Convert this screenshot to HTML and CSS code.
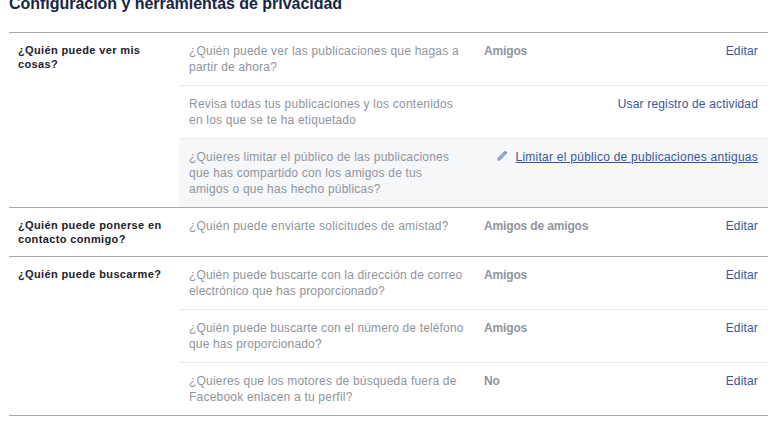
FILE: index.html
```html
<!DOCTYPE html>
<html lang="es">
<head>
<meta charset="utf-8">
<title>Configuración y herramientas de privacidad</title>
<link rel="stylesheet" href="styles.css">
</head>
<body>
<main class="settings">
  <h1 class="title">Configuración y herramientas de privacidad</h1>
  <section class="group">
    <h2 class="heading">¿Quién puede ver mis<br>cosas?</h2>
    <div class="rows">
      <div class="row">
        <p class="question">¿Quién puede ver las publicaciones que hagas a<br>partir de ahora?</p>
        <strong class="value">Amigos</strong>
        <a class="action">Editar</a>
      </div>
      <div class="row">
        <p class="question">Revisa todas tus publicaciones y los contenidos<br>en los que se te ha etiquetado</p>
        <a class="action">Usar registro de actividad</a>
      </div>
      <div class="row row-active">
        <p class="question">¿Quieres limitar el público de las publicaciones<br>que has compartido con los amigos de tus<br>amigos o que has hecho públicas?</p>
        <svg class="pencil" width="10" height="10" viewBox="0 0 10 10"><path d="M0 10V7.4L5.7 1.8 8.2 4.3 2.6 10Z" fill="#98a5c9"/><path d="M5.7 1.8 7.5 0H8.8L10 1.2V2.5L8.2 4.3Z" fill="#8c9ac2"/><path d="M0 7.6V10H2.4Z" fill="#c3cade"/></svg>
        <a class="action">Limitar el público de publicaciones antiguas</a>
      </div>
    </div>
  </section>
  <section class="group">
    <h2 class="heading">¿Quién puede ponerse en<br>contacto conmigo?</h2>
    <div class="rows">
      <div class="row">
        <p class="question">¿Quién puede enviarte solicitudes de amistad?</p>
        <strong class="value">Amigos de amigos</strong>
        <a class="action">Editar</a>
      </div>
    </div>
  </section>
  <section class="group">
    <h2 class="heading">¿Quién puede buscarme?</h2>
    <div class="rows">
      <div class="row">
        <p class="question question-tight">¿Quién puede buscarte con la dirección de correo<br>electrónico que has proporcionado?</p>
        <strong class="value">Amigos</strong>
        <a class="action">Editar</a>
      </div>
      <div class="row">
        <p class="question question-tight">¿Quién puede buscarte con el número de teléfono<br>que has proporcionado?</p>
        <strong class="value">Amigos</strong>
        <a class="action">Editar</a>
      </div>
      <div class="row">
        <p class="question">¿Quieres que los motores de búsqueda fuera de<br>Facebook enlacen a tu perfil?</p>
        <strong class="value">No</strong>
        <a class="action">Editar</a>
      </div>
    </div>
  </section>
</main>
</body>
</html>
```

FILE: styles.css
```css
body {
  margin: 0;
  background: #fff;
  font: 12px/16px "Liberation Sans", Arial, sans-serif;
  overflow: hidden;
}

.settings {
  width: 759px;
  margin-left: 9px;
  border-bottom: 1px solid #a9a9ab;
}

.title {
  height: 38px;
  margin: -6px 0 0;
  color: #162643;
  font-size: 16px;
  line-height: 20px;
  letter-spacing: -0.03px;
  white-space: nowrap;
}

.group {
  display: flex;
  border-top: 1px solid #a9a9ab;
}

.heading {
  box-sizing: border-box;
  width: 170px;
  margin: 0;
  padding: 10px 0 10px 9px;
  color: #1d2129;
  font-size: 11px;
  line-height: 14px;
  letter-spacing: 0.37px;
  white-space: nowrap;
}

.rows {
  flex: 1;
}

.row {
  display: flex;
  padding: 10px;
}

.row + .row {
  border-top: 1px solid #e9eaed;
}

.row-active {
  background: #f6f7f9;
}

.question {
  width: 295px;
  margin: 0;
  color: #90949c;
  letter-spacing: 0.21px;
  white-space: nowrap;
}

.question-tight {
  letter-spacing: 0.15px;
}

.value {
  color: #90949c;
  letter-spacing: -0.15px;
}

.action {
  margin-left: auto;
  color: #365899;
  letter-spacing: 0.16px;
  white-space: nowrap;
}

.pencil {
  flex: none;
  margin: 2px 0 0 13px;
}

.row-active .action {
  letter-spacing: 0.25px;
  text-decoration: underline;
}
```
